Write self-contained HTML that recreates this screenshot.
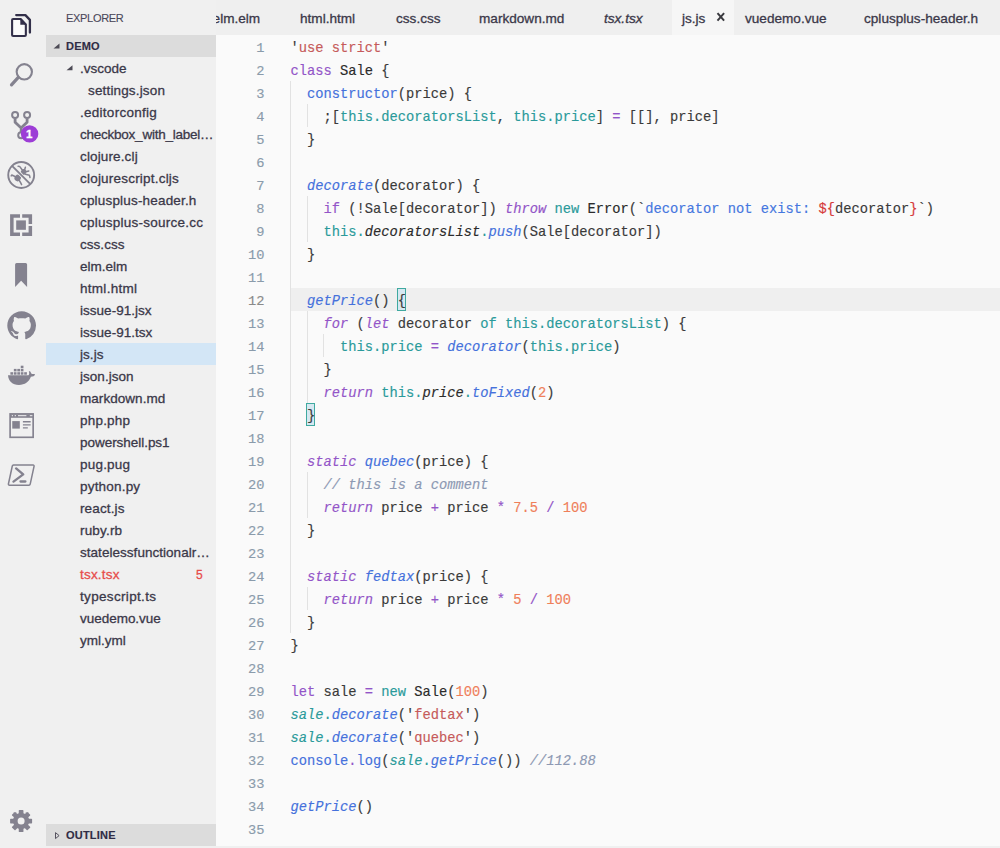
<!DOCTYPE html>
<html lang="en">
<head>
<meta charset="utf-8">
<title>js.js — demo</title>
<style>
*{box-sizing:border-box;margin:0;padding:0}
html,body{width:1000px;height:848px;overflow:hidden;background:#fafafa}
body{position:relative;-webkit-text-stroke:.3px;font-family:"Liberation Sans",sans-serif;color:#3b3849}
#act{position:absolute;left:0;top:0;width:46px;height:848px;background:#f0f0f0}
#side{position:absolute;left:46px;top:0;width:170px;height:848px;background:#f0f0f0;overflow:hidden}
#tabs{position:absolute;left:216px;top:0;width:784px;height:35px;background:#efefef;overflow:hidden}
#ed{position:absolute;left:216px;top:35px;width:784px;height:811px;background:#fafafa;overflow:hidden}
#foot{position:absolute;left:0;top:846px;width:1000px;height:2px;background:#f0f0f0}
#act svg{position:absolute}
#side .title{position:absolute;left:20px;top:11px;font-size:11px;line-height:14px;color:#4a4758;letter-spacing:-.3px;-webkit-text-stroke:.1px}
.hdr{-webkit-text-stroke:.15px;position:absolute;left:0;width:170px;height:22px;background:#dcdcdc;font-size:11px;font-weight:bold;line-height:22px;color:#2f2c45;padding-left:20px;letter-spacing:.2px}
.hdr .tw{position:absolute;left:7px;top:0}
.row{position:absolute;left:0;width:170px;height:22px;line-height:24px;font-size:13.5px;color:#3b3849;white-space:nowrap;letter-spacing:.25px}
.row.sel{background:#d3e6f6}
.row.err{color:#e74c4a}
.row .badge{position:absolute;right:13px;top:0;font-size:12px}
.tab{position:absolute;top:0;height:35px;line-height:38px;font-size:13.6px;color:#3b3849;white-space:nowrap}
.tab.act{background:#f6f6f6}
.tab i{font-style:italic}
.tab .x{position:absolute;left:43.500px;top:12px}
.ln,.code{font-family:"Liberation Mono",monospace;-webkit-text-stroke:.15px}
.ln{position:absolute;left:0;width:48.5px;text-align:right;font-size:13.7px;line-height:27px;height:23px;color:#8a9bab}
.ln.cur{color:#8a8a8a}
.code{position:absolute;left:74.400px;font-size:13.750px;line-height:27px;height:23px;white-space:pre;color:#2b2b2b}
.hl{position:absolute;left:74px;top:253px;width:710px;height:23px;background:#efefef}
.g{position:absolute;width:1px;background:#e2e2e2}
.k{color:#9355c8}.s{color:#c65b5b}.f{color:#4571dc}.t{color:#2a9a9a}.n{color:#ef7f5a}.c{color:#8d99b3}.b{color:#4577e0}.p{color:#3a3a3a}.r{color:#d63b3b}.v{color:#2b2b2b}.cl{color:#4571dc}
.i{font-style:italic}
.brbox{position:absolute;width:9px;height:23px;border:1px solid #3fa9a0;background:#d6e8f1}
</style>
</head>
<body>
<div id="act">
<svg style="left:0;top:0" width="46" height="848" viewBox="0 0 46 848">
<g fill="none" stroke="#33304a" stroke-linejoin="round" stroke-linecap="round"><path d="M16.200 15.100h9.200l4.500 4.800v12.600" stroke-width="2.300"/><path d="M13.100 19.050h7.600l5.150 5.500v10.500a1 1 0 0 1-1 1h-11.750a1 1 0 0 1-1-1v-15a1 1 0 0 1 1-1z" stroke-width="2.100" fill="#fbfbfb"/></g><path d="M20.300 18.600l5.900 6.100h-5.900z" fill="#33304a"/>
<g fill="none" stroke="#84828f" stroke-linecap="round"><circle cx="24.300" cy="71.800" r="7.650" stroke-width="2.100"/><path d="M18.300 77.400l-6.800 7.500" stroke-width="3.200"/></g>
<g fill="none" stroke="#84828f"><circle cx="15.100" cy="115.100" r="3" stroke-width="2"/><circle cx="27.100" cy="115.100" r="3" stroke-width="2"/><circle cx="21.200" cy="135.200" r="3" stroke-width="2"/><path d="M15.100 118.500v3.800l6.100 5.800v4M27.100 118.500v3.800l-6.100 5.800" stroke-width="2.800" stroke-linejoin="round"/></g>
<circle cx="29.600" cy="133.900" r="8.700" fill="#9d3dd6"/>
<g stroke="#84828f" fill="none" stroke-linecap="round" stroke-linejoin="round"><ellipse cx="17.700" cy="178" rx="3" ry="3.400" fill="#84828f" stroke="none" transform="rotate(40 17.700 178)"/><ellipse cx="23.600" cy="172" rx="2.600" ry="3" fill="#84828f" stroke="none" transform="rotate(40 23.600 172)"/><path d="M15.500 176.700l-3.700-1.700-.6.900M19.300 180.500l1.300 2.200 1 1.900M22.300 170l-2.700-3.600-1.500-.1M24.600 169.800l.8-2.600M25.800 171.700l3-.7M25.500 174.300l3.900.9.600 2.300" stroke-width="1.500"/><path d="M13.500 167.300l15.400 15.400" stroke="#f0f0f0" stroke-width="3.600" stroke-linecap="butt"/><path d="M12.040 165.840l18.320 18.320" stroke-width="1.900" stroke-linecap="butt"/><circle cx="21.200" cy="175" r="12.950" stroke-width="1.900"/></g>
<g fill="#84828f"><path d="M10.100 214.250h9.900v3.400h-6.400v14.800h6.400v3.500h-9.900z"/><path d="M22.200 214.250h9.900v9.650h-3.500v-6.250h-6.400z"/><path d="M28.600 226.050h3.500v9.900h-9.900v-3.500h6.400z"/><rect x="16.200" y="220.400" width="9.700" height="9.400"/></g>
<path d="M15.100 264.600a1.500 1.500 0 0 1 1.500-1.500h9a1.500 1.500 0 0 1 1.500 1.500v22.300l-5.950-6.100-6.050 6.100z" fill="#84828f"/>
<g transform="translate(7.300 311.200) scale(1.7950)"><path fill="#84828f" d="M8 0C3.580 0 0 3.580 0 8c0 3.540 2.290 6.530 5.470 7.590.4.070.55-.17.55-.38 0-.19-.01-.82-.01-1.490-2.010.37-2.530-.49-2.690-.94-.09-.23-.48-.94-.82-1.130-.28-.15-.68-.52-.01-.53.630-.01 1.080.58 1.230.82.720 1.210 1.870.87 2.330.66.070-.52.280-.87.510-1.070-1.780-.2-3.640-.89-3.640-3.950 0-.87.310-1.590.82-2.150-.08-.2-.36-1.020.08-2.120 0 0 .67-.21 2.200.82.640-.18 1.320-.27 2-.27.680 0 1.360.09 2 .27 1.530-1.040 2.200-.82 2.200-.82.440 1.100.16 1.920.08 2.120.51.560.82 1.270.82 2.150 0 3.070-1.870 3.750-3.650 3.950.29.250.54.730.54 1.480 0 1.070-.01 1.930-.01 2.200 0 .21.150.46.550.38A8.013 8.013 0 0 0 16 8c0-4.420-3.580-8-8-8z"/></g>
<g fill="#84828f"><rect x="10.40" y="372.20" width="2.700" height="2.500"/><rect x="13.85" y="372.20" width="2.700" height="2.500"/><rect x="17.30" y="372.20" width="2.700" height="2.500"/><rect x="20.75" y="372.20" width="2.700" height="2.500"/><rect x="24.20" y="372.20" width="2.700" height="2.500"/><rect x="13.85" y="368.90" width="2.700" height="2.500"/><rect x="17.30" y="368.90" width="2.700" height="2.500"/><rect x="20.75" y="368.90" width="2.700" height="2.500"/><rect x="20.75" y="365.70" width="2.700" height="2.500"/><path d="M8 375.300h20.500c.9-1.300.9-2.600.3-3.900 1-.5 1.600.2 2 1 .4 1 1 1.500 2.200 1.500.9 0 1.600.1 2.100.5-.7 1.600-2.100 2.200-4.200 2.300-1.900 5-6 8.200-12 8.200-6.500 0-10.400-3.600-10.900-9.600z"/></g>
<g fill="none" stroke="#84828f"><rect x="10.100" y="413.900" width="23.050" height="23.400" stroke-width="1.650"/><path d="M10 416h23.200" stroke-width="3.600"/><path d="M22.900 421.800h7.750M22.900 424.900h7.750M22.900 427.900h4.900" stroke-width="1.400"/><path d="M11.800 415.700h1.200M14.700 415.700h1.300M18 415.700h8.400M29.800 415.700h2.600" stroke="#f4f4f4" stroke-width="1"/></g><rect x="12.250" y="421.100" width="7.550" height="7.500" fill="#84828f"/>
<g fill="none" stroke="#84828f" stroke-linecap="round" stroke-linejoin="round"><path d="M13.500 465h19.600a1 1 0 0 1 1 1.200l-3.900 18a1.300 1.300 0 0 1-1.300 1h-19.500a1 1 0 0 1-1-1.200l3.900-18a1.300 1.300 0 0 1 1.200-1z" stroke-width="1.500"/><path d="M16.100 468.400l7.100 6-9.700 7.200" stroke-width="2.400"/><path d="M20.500 481.500h4.900" stroke-width="2.300"/></g>
<g fill="#84828f"><rect x="18.75" y="810.10" width="4.700" height="22" rx=".7" transform="rotate(0 21.1 821.1)"/><rect x="18.75" y="810.10" width="4.700" height="22" rx=".7" transform="rotate(45 21.1 821.1)"/><rect x="18.75" y="810.10" width="4.700" height="22" rx=".7" transform="rotate(90 21.1 821.1)"/><rect x="18.75" y="810.10" width="4.700" height="22" rx=".7" transform="rotate(135 21.1 821.1)"/><circle cx="21.1" cy="821.1" r="8.100"/></g><circle cx="21.1" cy="821.1" r="3.500" fill="#f0f0f0"/>
</svg>
<div style="position:absolute;left:21.300px;top:126px;width:16px;text-align:center;font-size:11.500px;font-weight:bold;color:#fff;line-height:16px">1</div>
</div>
<div id="side">
<div class="title">EXPLORER</div>
<div class="hdr" style="top:35px"><svg class="tw" width="10" height="22" viewBox="0 0 10 22"><path d="M6.5 8.500v5h-6z" fill="#4c4a55"/></svg>DEMO</div>
<div class="row" style="top:57px"><svg style="position:absolute;left:20px;top:0" width="10" height="22" viewBox="0 0 10 22"><path d="M6.500 8.200v5h-6z" fill="#4c4a55"/></svg><span style="position:absolute;left:34px;letter-spacing:0.003px">.vscode</span></div>
<div class="row" style="top:79px"><span style="position:absolute;left:42px;letter-spacing:0.154px">settings.json</span></div>
<div class="row" style="top:101px"><span style="position:absolute;left:34px;letter-spacing:0.269px">.editorconfig</span></div>
<div class="row" style="top:123px"><span style="position:absolute;left:34px;letter-spacing:-0.24px">checkbox_with_label…</span></div>
<div class="row" style="top:145px"><span style="position:absolute;left:34px;letter-spacing:0.138px">clojure.clj</span></div>
<div class="row" style="top:167px"><span style="position:absolute;left:34px;letter-spacing:0.209px">clojurescript.cljs</span></div>
<div class="row" style="top:189px"><span style="position:absolute;left:34px;letter-spacing:0.179px">cplusplus-header.h</span></div>
<div class="row" style="top:211px"><span style="position:absolute;left:34px;letter-spacing:0.25px">cplusplus-source.cc</span></div>
<div class="row" style="top:233px"><span style="position:absolute;left:34px;letter-spacing:0.041px">css.css</span></div>
<div class="row" style="top:255px"><span style="position:absolute;left:34px;letter-spacing:0.005px">elm.elm</span></div>
<div class="row" style="top:277px"><span style="position:absolute;left:34px;letter-spacing:0.282px">html.html</span></div>
<div class="row" style="top:299px"><span style="position:absolute;left:34px;letter-spacing:0.022px">issue-91.jsx</span></div>
<div class="row" style="top:321px"><span style="position:absolute;left:34px;letter-spacing:0.022px">issue-91.tsx</span></div>
<div class="row sel" style="top:343px"><span style="position:absolute;left:34px;letter-spacing:0.06px">js.js</span></div>
<div class="row" style="top:365px"><span style="position:absolute;left:34px;letter-spacing:0.028px">json.json</span></div>
<div class="row" style="top:387px"><span style="position:absolute;left:34px;letter-spacing:0.047px">markdown.md</span></div>
<div class="row" style="top:409px"><span style="position:absolute;left:34px;letter-spacing:0.212px">php.php</span></div>
<div class="row" style="top:431px"><span style="position:absolute;left:34px;letter-spacing:-0.037px">powershell.ps1</span></div>
<div class="row" style="top:453px"><span style="position:absolute;left:34px;letter-spacing:0.212px">pug.pug</span></div>
<div class="row" style="top:475px"><span style="position:absolute;left:34px;letter-spacing:0.195px">python.py</span></div>
<div class="row" style="top:497px"><span style="position:absolute;left:34px;letter-spacing:0.129px">react.js</span></div>
<div class="row" style="top:519px"><span style="position:absolute;left:34px;letter-spacing:0.183px">ruby.rb</span></div>
<div class="row" style="top:541px"><span style="position:absolute;left:34px;letter-spacing:0.035px">statelessfunctionalr…</span></div>
<div class="row err" style="top:563px"><span class="badge">5</span><span style="position:absolute;left:34px;letter-spacing:0.191px">tsx.tsx</span></div>
<div class="row" style="top:585px"><span style="position:absolute;left:34px;letter-spacing:0.328px">typescript.ts</span></div>
<div class="row" style="top:607px"><span style="position:absolute;left:34px;letter-spacing:-0.024px">vuedemo.vue</span></div>
<div class="row" style="top:629px"><span style="position:absolute;left:34px;letter-spacing:0.021px">yml.yml</span></div>
<div class="hdr" style="top:824px;height:22px;line-height:22px"><svg class="tw" width="10" height="22" viewBox="0 0 10 22"><path d="M2.500 8.600l3.600 3-3.600 3z" fill="none" stroke="#55525f" stroke-width="1"/></svg>OUTLINE</div>
</div>
<div id="tabs">
<div class="tab" style="left:-3.4000000000000057px">elm.elm</div>
<div class="tab" style="left:84px">html.html</div>
<div class="tab" style="left:180px">css.css</div>
<div class="tab" style="left:263px">markdown.md</div>
<div class="tab" style="left:388px"><i>tsx.tsx</i></div>
<div class="tab act" style="left:456px;width:62px"><span style="position:absolute;left:10px">js.js</span><svg class="x" width="10" height="10" viewBox="0 0 10 10"><path d="M1.500 1.200l6.600 7.400M8.100 1.200l-6.600 7.400" stroke="#3a3a3f" stroke-width="2" fill="none"/></svg></div>
<div class="tab" style="left:529px">vuedemo.vue</div>
<div class="tab" style="left:648px">cplusplus-header.h</div>
</div>
<div id="ed">
<div class="hl"></div>
<div class="brbox" style="left:181.08px;top:253px"></div>
<div class="brbox" style="left:89.80px;top:368px"></div>
<div class="g" style="left:74.00px;top:46px;height:552px"></div>
<div class="g" style="left:90.50px;top:69px;height:23px"></div>
<div class="g" style="left:90.50px;top:161px;height:46px"></div>
<div class="g" style="left:90.50px;top:276px;height:92px"></div>
<div class="g" style="left:107.01px;top:299px;height:23px"></div>
<div class="g" style="left:90.50px;top:437px;height:46px"></div>
<div class="g" style="left:90.50px;top:552px;height:23px"></div>
<div class="ln" style="top:0px">1</div>
<div class="code" style="top:0px"><span class="p">&#x27;</span><span class="s">use strict</span><span class="p">&#x27;</span></div>
<div class="ln" style="top:23px">2</div>
<div class="code" style="top:23px"><span class="k">class</span><span class="v"> Sale </span><span class="p">{</span></div>
<div class="ln" style="top:46px">3</div>
<div class="code" style="top:46px"><span class="v">  </span><span class="f">constructor</span><span class="p">(price) {</span></div>
<div class="ln" style="top:69px">4</div>
<div class="code" style="top:69px"><span class="v">    </span><span class="p">;[</span><span class="t">this.decoratorsList</span><span class="p">, </span><span class="t">this.price</span><span class="p">] </span><span class="k">=</span><span class="p"> [[], price]</span></div>
<div class="ln" style="top:92px">5</div>
<div class="code" style="top:92px"><span class="p">  }</span></div>
<div class="ln" style="top:115px">6</div>
<div class="ln" style="top:138px">7</div>
<div class="code" style="top:138px"><span class="v">  </span><span class="f i">decorate</span><span class="p">(decorator) {</span></div>
<div class="ln" style="top:161px">8</div>
<div class="code" style="top:161px"><span class="v">    </span><span class="k">if</span><span class="p"> (!Sale[decorator]) </span><span class="k i">throw</span><span class="v"> </span><span class="t">new</span><span class="v"> Error</span><span class="p">(`</span><span class="b">decorator not exist: </span><span class="r">${</span><span class="p">decorator</span><span class="r">}</span><span class="p">`)</span></div>
<div class="ln" style="top:184px">9</div>
<div class="code" style="top:184px"><span class="v">    </span><span class="t">this</span><span class="t">.</span><span class="v i">decoratorsList</span><span class="t">.</span><span class="f i">push</span><span class="p">(Sale[decorator])</span></div>
<div class="ln" style="top:207px">10</div>
<div class="code" style="top:207px"><span class="p">  }</span></div>
<div class="ln" style="top:230px">11</div>
<div class="ln cur" style="top:253px">12</div>
<div class="code" style="top:253px"><span class="v">  </span><span class="f i">getPrice</span><span class="p">() </span><span class="p">{</span></div>
<div class="ln" style="top:276px">13</div>
<div class="code" style="top:276px"><span class="v">    </span><span class="k i">for</span><span class="p"> (</span><span class="k i">let</span><span class="p"> decorator </span><span class="t">of</span><span class="v"> </span><span class="t">this.decoratorsList</span><span class="p">) {</span></div>
<div class="ln" style="top:299px">14</div>
<div class="code" style="top:299px"><span class="v">      </span><span class="t">this.price</span><span class="v"> </span><span class="k">=</span><span class="v"> </span><span class="f i">decorator</span><span class="p">(</span><span class="t">this.price</span><span class="p">)</span></div>
<div class="ln" style="top:322px">15</div>
<div class="code" style="top:322px"><span class="p">    }</span></div>
<div class="ln" style="top:345px">16</div>
<div class="code" style="top:345px"><span class="v">    </span><span class="k i">return</span><span class="v"> </span><span class="t">this.</span><span class="v i">price</span><span class="t">.</span><span class="f i">toFixed</span><span class="p">(</span><span class="n">2</span><span class="p">)</span></div>
<div class="ln" style="top:368px">17</div>
<div class="code" style="top:368px"><span class="v">  </span><span class="p">}</span></div>
<div class="ln" style="top:391px">18</div>
<div class="ln" style="top:414px">19</div>
<div class="code" style="top:414px"><span class="v">  </span><span class="k i">static</span><span class="v"> </span><span class="f i">quebec</span><span class="p">(price) {</span></div>
<div class="ln" style="top:437px">20</div>
<div class="code" style="top:437px"><span class="v">    </span><span class="c i">// this is a comment</span></div>
<div class="ln" style="top:460px">21</div>
<div class="code" style="top:460px"><span class="v">    </span><span class="k i">return</span><span class="p"> price </span><span class="k">+</span><span class="p"> price </span><span class="k">*</span><span class="v"> </span><span class="n">7.5</span><span class="v"> </span><span class="k">/</span><span class="v"> </span><span class="n">100</span></div>
<div class="ln" style="top:483px">22</div>
<div class="code" style="top:483px"><span class="p">  }</span></div>
<div class="ln" style="top:506px">23</div>
<div class="ln" style="top:529px">24</div>
<div class="code" style="top:529px"><span class="v">  </span><span class="k i">static</span><span class="v"> </span><span class="f i">fedtax</span><span class="p">(price) {</span></div>
<div class="ln" style="top:552px">25</div>
<div class="code" style="top:552px"><span class="v">    </span><span class="k i">return</span><span class="p"> price </span><span class="k">+</span><span class="p"> price </span><span class="k">*</span><span class="v"> </span><span class="n">5</span><span class="v"> </span><span class="k">/</span><span class="v"> </span><span class="n">100</span></div>
<div class="ln" style="top:575px">26</div>
<div class="code" style="top:575px"><span class="p">  }</span></div>
<div class="ln" style="top:598px">27</div>
<div class="code" style="top:598px"><span class="p">}</span></div>
<div class="ln" style="top:621px">28</div>
<div class="ln" style="top:644px">29</div>
<div class="code" style="top:644px"><span class="k">let</span><span class="p"> sale </span><span class="k">=</span><span class="v"> </span><span class="t">new</span><span class="v"> Sale</span><span class="p">(</span><span class="n">100</span><span class="p">)</span></div>
<div class="ln" style="top:667px">30</div>
<div class="code" style="top:667px"><span class="t i">sale</span><span class="t">.</span><span class="f i">decorate</span><span class="p">(&#x27;</span><span class="s">fedtax</span><span class="p">&#x27;)</span></div>
<div class="ln" style="top:690px">31</div>
<div class="code" style="top:690px"><span class="t i">sale</span><span class="t">.</span><span class="f i">decorate</span><span class="p">(&#x27;</span><span class="s">quebec</span><span class="p">&#x27;)</span></div>
<div class="ln" style="top:713px">32</div>
<div class="code" style="top:713px"><span class="cl">console</span><span class="k">.</span><span class="cl">log</span><span class="p">(</span><span class="t i">sale</span><span class="t">.</span><span class="f i">getPrice</span><span class="p">()) </span><span class="c i">//112.88</span></div>
<div class="ln" style="top:736px">33</div>
<div class="ln" style="top:759px">34</div>
<div class="code" style="top:759px"><span class="f i">getPrice</span><span class="p">()</span></div>
<div class="ln" style="top:782px">35</div>
</div>
<div id="foot"></div>
</body>
</html>
